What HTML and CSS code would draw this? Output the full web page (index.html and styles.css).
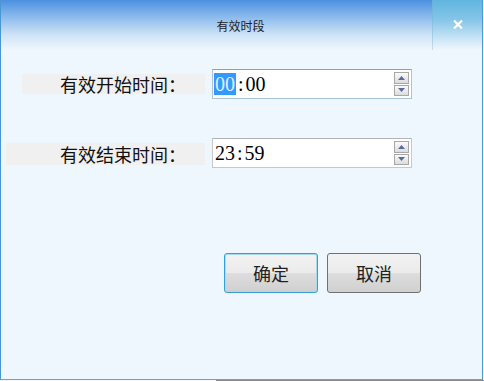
FILE: index.html
```html
<!DOCTYPE html>
<html lang="zh">
<head>
<meta charset="utf-8">
<title>有效时段</title>
<link rel="stylesheet" href="styles.css">
</head>
<body>
<div class="dialog">
  <div class="titlebar">
    <div class="title">有效时段</div>
    <div class="close">
      <svg width="10" height="9" viewBox="0 0 10 9"><path d="M1 0.5 L9 8.5 M9 0.5 L1 8.5" stroke="#fff" stroke-width="2.2"/></svg>
    </div>
  </div>
  <div class="form">
    <div class="row">
      <div class="label-col"><div class="label label-start">有效开始时间：</div></div>
      <div class="spin focused">
        <div class="value"><span class="sel">00</span><span class="colon">:</span>00</div>
        <div class="arrows">
          <div class="arrow"><svg width="7" height="4" viewBox="0 0 7 4"><path d="M3.5 0 L7 4 L0 4 Z" fill="#5a6a9a"/></svg></div>
          <div class="arrow"><svg width="7" height="4" viewBox="0 0 7 4"><path d="M0 0 L7 0 L3.5 4 Z" fill="#5a6a9a"/></svg></div>
        </div>
      </div>
    </div>
    <div class="row">
      <div class="label-col"><div class="label label-end">有效结束时间：</div></div>
      <div class="spin">
        <div class="value">23<span class="colon">:</span>59</div>
        <div class="arrows">
          <div class="arrow"><svg width="7" height="4" viewBox="0 0 7 4"><path d="M3.5 0 L7 4 L0 4 Z" fill="#5a6a9a"/></svg></div>
          <div class="arrow"><svg width="7" height="4" viewBox="0 0 7 4"><path d="M0 0 L7 0 L3.5 4 Z" fill="#5a6a9a"/></svg></div>
        </div>
      </div>
    </div>
    <div class="buttons">
      <button class="btn primary">确定</button>
      <button class="btn">取消</button>
    </div>
  </div>
</div>
<div class="bottom-strip"><div class="strip-dark"></div></div>
</body>
</html>
```
FILE: styles.css
```css
html, body {
  margin: 0;
  padding: 0;
  background: #f4f8fb;
  width: 484px;
  height: 381px;
  overflow: hidden;
}
.dialog {
  width: 483px;
  height: 380px;
  box-sizing: border-box;
  border-left: 1px solid #4a96d4;
  border-right: 1px solid #4aa0cc;
  border-bottom: 1px solid #5aaac8;
  background: #eef7fd;
  font-family: "Noto Sans CJK SC", sans-serif;
  display: flex;
  flex-direction: column;
}
.titlebar {
  height: 50px;
  display: flex;
  background: linear-gradient(to bottom, #4b90e0 0%, #8dbcec 35%, #cfe3f7 70%, #eef7fd 100%);
  flex-shrink: 0;
}
.title {
  flex: 1;
  display: flex;
  align-items: center;
  justify-content: center;
  font-size: 12px;
  color: #222;
  padding-left: 48px;
  padding-top: 1px;
}
.close {
  width: 49px;
  display: flex;
  align-items: center;
  justify-content: center;
  background: linear-gradient(to bottom, #5fb5df 0%, #86c6e8 40%, #cfe7f6 80%, #eef7fd 100%);
  border-left: 1px solid rgba(120, 170, 210, 0.35);
  padding-bottom: 1px;
}
.form {
  padding-top: 19px;
  display: flex;
  flex-direction: column;
}
.row {
  display: flex;
  align-items: center;
  height: 30px;
}
.row + .row {
  margin-top: 39px;
}
.label-col {
  width: 204px;
  display: flex;
  justify-content: flex-end;
  margin-right: 7px;
}
.label {
  background: #f0f0f0;
  font-size: 18px;
  color: #111;
  text-align: right;
  padding-right: 19px;
  box-sizing: border-box;
  line-height: 20px;
  height: 20px;
}
.label-start {
  width: 183px;
}
.label-end {
  width: 199px;
  height: 22px;
  line-height: 22px;
  margin-top: 1px;
}
.spin {
  width: 200px;
  height: 30px;
  box-sizing: border-box;
  border: 1px solid #c8c8c8;
  border-top-color: #b4b4b4;
  background: #fff;
  display: flex;
  align-items: center;
  justify-content: space-between;
  padding: 0 1px 0 1px;
}
.spin.focused {
  border-color: #aac4da;
  border-top-color: #7ea6c8;
}
.value {
  font-family: "Liberation Serif", serif;
  font-size: 20px;
  color: #000;
  line-height: 22px;
  padding-left: 1px;
}
.sel {
  background: #3399ff;
  color: #dff0ff;
  display: inline-block;
  padding: 0 1px;
  margin-left: -1px;
}
.colon {
  margin: 0 2px;
}
.arrows {
  width: 15px;
  height: 24px;
  display: flex;
  flex-direction: column;
  gap: 1px;
  margin-right: 1px;
}
.arrow {
  flex: 1;
  box-sizing: border-box;
  border: 1px solid #a8a8a8;
  background: linear-gradient(to bottom, #fafafa, #dcdcdc);
  display: flex;
  align-items: center;
  justify-content: center;
}
.buttons {
  display: flex;
  gap: 9px;
  margin-top: 85px;
  padding-left: 223px;
}
.btn {
  width: 94px;
  height: 40px;
  box-sizing: border-box;
  border: 1px solid #707070;
  border-radius: 3px;
  background: linear-gradient(to bottom, #f2f2f2 0%, #ebebeb 50%, #dddddd 51%, #d0d0d0 100%);
  font-family: "Noto Sans CJK SC", sans-serif;
  font-size: 18px;
  color: #222;
  padding: 0;
  line-height: 1;
}
.btn.primary {
  border-color: #3c9fd3;
  box-shadow: inset 0 0 0 1px #a6d8f0;
}
.bottom-strip {
  height: 1px;
  display: flex;
  background: #f4f8fb;
}
.strip-dark {
  margin-left: 216px;
  flex: 1;
  background: #8c8c8c;
}
```
